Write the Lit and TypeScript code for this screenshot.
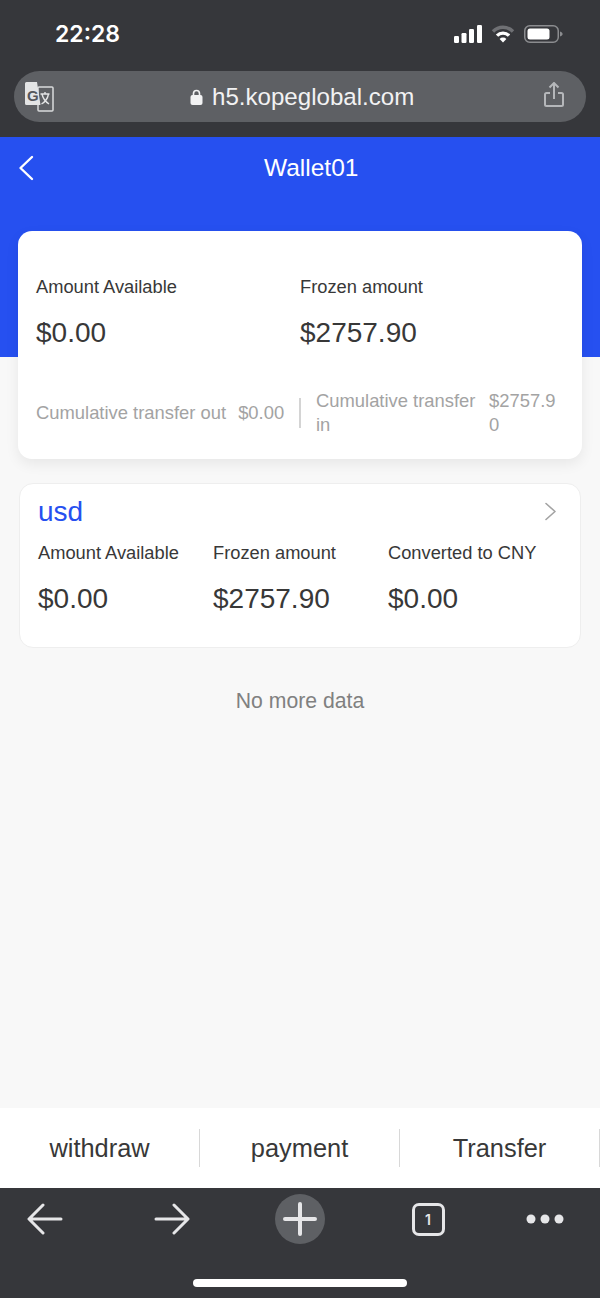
import { LitElement, html, css } from "lit";
import { customElement } from "lit/decorators.js";

@customElement("app-root")
export class AppRoot extends LitElement {
  static styles = css`
    :host {
      display: flex;
      flex-direction: column;
      width: 600px;
      height: 1298px;
      overflow: hidden;
      font-family: "Liberation Sans", Arial, sans-serif;
      color: #383838;
      background: #f8f8f8;
    }

    svg {
      display: block;
    }

    /* browser chrome, top */
    .c-chrome {
      background: #36373b;
      height: 137px;
      box-sizing: border-box;
      flex: none;
    }

    .c-status {
      height: 71px;
      box-sizing: border-box;
      padding: 18px 37px 0 55px;
      display: flex;
      justify-content: space-between;
      align-items: flex-start;
    }

    .c-status__time {
      font-family: Inter, sans-serif;
      font-weight: 600;
      font-size: 23px;
      line-height: 32px;
      color: #fff;
    }

    .c-status__icons {
      display: flex;
      align-items: center;
      gap: 9px;
      padding-top: 7px;
    }

    .c-address {
      margin: 0 14px;
      height: 51px;
      border-radius: 26px;
      background: #5e6064;
      display: grid;
      grid-template-columns: 165px auto 1fr;
      align-items: center;
      padding: 0 22px 0 11px;
    }

    .c-address__url {
      display: flex;
      align-items: center;
      gap: 9px;
      font-size: 24.1px;
      color: #f2f2f3;
    }

    .c-address__share {
      justify-self: end;
      margin-top: -3px;
    }

    /* page */
    .c-main {
      flex: 1;
      background: linear-gradient(#2650f0 220px, #f8f8f8 220px);
      padding: 0 18px;
      display: flex;
      flex-direction: column;
    }

    .c-nav {
      height: 62px;
      margin: 0 -18px 32px;
      padding-left: 18px;
      display: grid;
      grid-template-columns: 246px auto;
      align-items: center;
      color: #fff;
      font-size: 24.5px;
    }

    .c-summary {
      background: #fff;
      border-radius: 14px;
      box-shadow: 0 5px 14px rgba(0, 0, 0, 0.07);
      padding: 44px 18px 22px;
    }

    .c-summary__top {
      display: grid;
      grid-template-columns: 1fr 1fr;
    }

    .c-label {
      font-size: 18.3px;
      line-height: 24px;
    }

    .c-value {
      font-size: 28px;
      line-height: 40px;
      margin-top: 14px;
    }

    .c-summary__bottom {
      margin-top: 36px;
      display: grid;
      grid-template-columns: 1fr 1fr;
      align-items: center;
      font-size: 18.4px;
      line-height: 24px;
      color: #a3a3a3;
    }

    .c-transfer {
      display: flex;
      gap: 12px;
    }

    .c-transfer--in {
      position: relative;
      padding-left: 16px;
      gap: 13px;
    }

    .c-transfer--in::before {
      content: "";
      position: absolute;
      left: -1px;
      top: 9px;
      bottom: 9px;
      width: 2px;
      background: #d4d4d4;
    }

    .c-transfer--in .c-transfer__name {
      flex: 1;
    }

    .c-transfer--in .c-transfer__amount {
      width: 70px;
      margin-right: 5px;
      word-break: break-all;
    }

    .c-currency {
      margin: 24px 1px 0;
      background: #fff;
      border: 1px solid #eee;
      border-radius: 14px;
      padding: 8px 18px 28px;
    }

    .c-currency__head {
      display: flex;
      justify-content: space-between;
      align-items: center;
      height: 40px;
      font-size: 28px;
      color: #2650f0;
      margin-bottom: 9px;
      padding-right: 6px;
    }

    .c-currency__chevron {
      margin-top: -1px;
    }

    .c-currency__cols {
      display: grid;
      grid-template-columns: repeat(3, 175px);
    }

    .c-end {
      margin-top: 38px;
      text-align: center;
      font-size: 21.2px;
      line-height: 30px;
      color: #808080;
    }

    /* action bar */
    .c-actions {
      flex: none;
      height: 80px;
      background: #fff;
      display: grid;
      grid-template-columns: repeat(3, 1fr);
      align-items: center;
    }

    .c-actions__item {
      height: 38px;
      line-height: 38px;
      text-align: center;
      font-size: 25.4px;
      border-right: 1px solid #d8d8d8;
    }

    /* browser chrome, bottom */
    .c-toolbar {
      flex: none;
      height: 110px;
      box-sizing: border-box;
      background: #36373b;
      padding-top: 6px;
      display: flex;
      flex-direction: column;
      align-items: center;
    }

    .c-toolbar__icons {
      width: 100%;
      height: 50px;
      display: grid;
      grid-template-columns: 90px 164px 92px 164px 70px;
      justify-items: center;
      align-items: center;
    }

    .c-tabs {
      width: 33px;
      height: 33px;
      box-sizing: border-box;
      border: 3px solid #e6e6e8;
      border-radius: 7px;
      color: #e6e6e8;
      font-family: Inter, sans-serif;
      font-size: 14px;
      font-weight: 600;
      line-height: 27px;
      text-align: center;
    }

    .c-new {
      width: 50px;
      height: 50px;
      border-radius: 50%;
      background: #5e6064;
      display: flex;
      align-items: center;
      justify-content: center;
    }

    .c-home {
      margin-top: 35px;
      width: 214px;
      height: 8px;
      border-radius: 4px;
      background: #fff;
    }
  `;

  private renderStatusIcons() {
    return html`
      <div class="c-status__icons">
        <svg width="28" height="18" viewBox="0 0 28 18" fill="#fff">
          <rect x="0" y="11" width="5" height="7" rx="1.2" />
          <rect x="7.5" y="8" width="5" height="10" rx="1.2" />
          <rect x="15" y="4" width="5" height="14" rx="1.2" />
          <rect x="23" y="0" width="5" height="18" rx="1.2" />
        </svg>
        <svg width="24" height="18" viewBox="0 0 24 18" fill="none" stroke-width="3.4">
          <path d="M2 6.5a14 14 0 0 1 20 0" stroke="#6f7074" />
          <path d="M6 10.6a8.6 8.6 0 0 1 12 0" stroke="#fff" />
          <path d="M12 17.5 8.6 14a4.8 4.8 0 0 1 6.8 0z" fill="#fff" stroke="none" />
        </svg>
        <svg width="39" height="18" viewBox="0 0 39 18">
          <rect x="0.75" y="0.75" width="33.5" height="16.5" rx="5" fill="none" stroke="#8b8c8f" stroke-width="1.5" />
          <rect x="3.5" y="3.5" width="22" height="11" rx="2.5" fill="#fff" />
          <path d="M36 6.5c1.6.4 2.6 1.4 2.6 2.5s-1 2.1-2.6 2.5z" fill="#8b8c8f" />
        </svg>
      </div>
    `;
  }

  private renderTranslate() {
    return html`
      <svg width="29" height="30" viewBox="0 0 29 30">
        <rect x="13" y="5" width="15" height="24" rx="1" fill="#5e6064" stroke="#d9dadb" stroke-width="1.5" />
        <path d="M1.5 0H12l3.5 23H1.5A1.5 1.5 0 0 1 0 21.5V1.5A1.5 1.5 0 0 1 1.5 0z" fill="#e3e4e5" />
        <text x="2" y="18.500" font-family="Liberation Sans, sans-serif" font-weight="700" font-size="15" fill="#55575b">G</text>
        <path d="M15.5 12h9M20 10v2M17 12c1 5 4 8 7 10M23.5 12c-1 5-3.5 8-7 10" fill="none" stroke="#e3e4e5" stroke-width="1.4" />
      </svg>
    `;
  }

  render() {
    return html`
      <header class="c-chrome">
        <div class="c-status">
          <span class="c-status__time">22:28</span>
          ${this.renderStatusIcons()}
        </div>
        <div class="c-address">
          ${this.renderTranslate()}
          <div class="c-address__url">
            <svg width="13" height="16" viewBox="0 0 13 16">
              <path d="M3.5 7V4.5a3 3 0 0 1 6 0V7" fill="none" stroke="#f2f2f3" stroke-width="1.6" />
              <rect x="0.5" y="6" width="12" height="10" rx="2" fill="#f2f2f3" />
            </svg>
            <span>h5.kopeglobal.com</span>
          </div>
          <svg class="c-address__share" width="20" height="26" viewBox="0 0 20 26" fill="none" stroke="#b5b7ba" stroke-width="2">
            <path d="M6 11H2.5A1.5 1.5 0 0 0 1 12.5v10A1.5 1.5 0 0 0 2.5 24h15a1.5 1.5 0 0 0 1.500-1.500v-10A1.5 1.5 0 0 0 17.500 11H14" />
            <path d="M10 17V1.500M5.500 5.500 10 1 14.500 5.500" />
          </svg>
        </div>
      </header>

      <main class="c-main">
        <nav class="c-nav">
          <svg width="16" height="26" viewBox="0 0 16 26" fill="none" stroke="#fff" stroke-width="2.4" stroke-linecap="round" stroke-linejoin="round">
            <path d="M14 2 2.500 13 14 24" />
          </svg>
          <span>Wallet01</span>
        </nav>

        <section class="c-summary">
          <div class="c-summary__top">
            <div>
              <div class="c-label">Amount Available</div>
              <div class="c-value">$0.00</div>
            </div>
            <div>
              <div class="c-label">Frozen amount</div>
              <div class="c-value">$2757.90</div>
            </div>
          </div>
          <div class="c-summary__bottom">
            <div class="c-transfer">
              <span>Cumulative transfer out</span>
              <span>$0.00</span>
            </div>
            <div class="c-transfer c-transfer--in">
              <span class="c-transfer__name">Cumulative transfer in</span>
              <span class="c-transfer__amount">$2757.90</span>
            </div>
          </div>
        </section>

        <section class="c-currency">
          <div class="c-currency__head">
            <span>usd</span>
            <svg class="c-currency__chevron" width="13" height="19" viewBox="0 0 13 19" fill="none" stroke="#a3a3a3" stroke-width="1.6" stroke-linecap="round" stroke-linejoin="round">
              <path d="M3 1.5 12 9.500 3 17.500" />
            </svg>
          </div>
          <div class="c-currency__cols">
            <div>
              <div class="c-label">Amount Available</div>
              <div class="c-value">$0.00</div>
            </div>
            <div>
              <div class="c-label">Frozen amount</div>
              <div class="c-value">$2757.90</div>
            </div>
            <div>
              <div class="c-label">Converted to CNY</div>
              <div class="c-value">$0.00</div>
            </div>
          </div>
        </section>

        <div class="c-end">No more data</div>
      </main>

      <div class="c-actions">
        <div class="c-actions__item">withdraw</div>
        <div class="c-actions__item">payment</div>
        <div class="c-actions__item">Transfer</div>
      </div>

      <footer class="c-toolbar">
        <div class="c-toolbar__icons">
          <svg width="36" height="32" viewBox="0 0 36 32" fill="none" stroke="#e6e6e8" stroke-width="3" stroke-linecap="round" stroke-linejoin="round">
            <path d="M34 16H3M16 2 2 16l14 14" />
          </svg>
          <svg width="36" height="32" viewBox="0 0 36 32" fill="none" stroke="#e6e6e8" stroke-width="3" stroke-linecap="round" stroke-linejoin="round">
            <path d="M2 16h31M20 2l14 14-14 14" />
          </svg>
          <div class="c-new">
            <svg width="34" height="34" viewBox="0 0 34 34" stroke="#e6e6e8" stroke-width="4" stroke-linecap="round">
              <path d="M17 2v30M2 17h30" />
            </svg>
          </div>
          <div class="c-tabs">1</div>
          <svg width="38" height="10" viewBox="0 0 38 10" fill="#e6e6e8">
            <circle cx="5" cy="5" r="4.5" />
            <circle cx="19" cy="5" r="4.5" />
            <circle cx="33" cy="5" r="4.5" />
          </svg>
        </div>
        <div class="c-home"></div>
      </footer>
    `;
  }
}
